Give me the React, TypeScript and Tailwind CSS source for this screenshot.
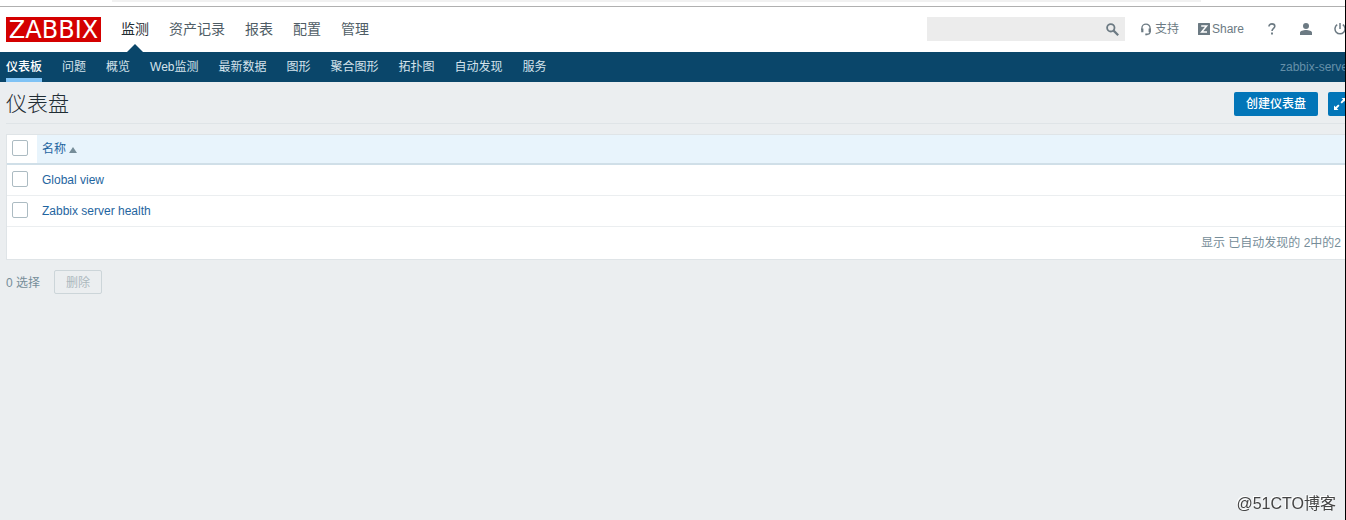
import { useState } from "react";

function App() {
  const [selected, setSelected] = useState<string[]>([]);

  const toggle = (name: string) =>
    setSelected((prev) =>
      prev.includes(name) ? prev.filter((n) => n !== name) : [...prev, name]
    );

  const allSelected = selected.length === dashboards.length;

  return (
    <div className="min-h-screen overflow-hidden border-r border-black bg-[#ebeef0] font-['Liberation_Sans','Noto_Sans_CJK_SC',sans-serif] text-xs leading-4 text-[#1f2c33]">
      <div className="h-[7px] border-b border-[#b0b0b0] bg-white px-28">
        <div className="mr-8 h-0.5 bg-[#f1f1f1]" />
      </div>
      <Header />
      <SubNav />

      <main className="pl-1.5">
        <div className="flex h-[42px] items-center justify-between border-b border-[#dfe4e7] pt-0.5">
          <h1 className="text-[21px] leading-6 font-light">仪表盘</h1>
          <div className="-mr-[7px] flex gap-2.5">
            <button className="h-6 rounded-xs bg-[#0275b8] px-3 font-medium text-white">
              创建仪表盘
            </button>
            <button
              aria-label="全屏"
              className="flex size-6 items-center justify-center rounded-xs bg-[#0275b8] text-white"
            >
              <FullscreenIcon />
            </button>
          </div>
        </div>

        <table className="mt-2.5 w-full border-separate border-spacing-0 border border-r-0 border-[#dfe4e7] bg-white text-left">
          <thead>
            <tr className="h-[30px]">
              <th className="w-[30px] border-b-2 border-[#d0dfe8] px-[5px] pb-0.5">
                <Checkbox
                  label="全选"
                  checked={allSelected}
                  onChange={() => setSelected(allSelected ? [] : dashboards)}
                />
              </th>
              <th className="border-b-2 border-[#d0dfe8] bg-[#e8f4fc] px-[5px] font-normal">
                <a href="#name" className="flex items-center gap-[3px] text-[#1f65a0]">
                  名称
                  <svg width="8" height="6" viewBox="0 0 8 6" className="mt-0.5">
                    <path d="M4 0l4 6H0z" fill="#768d99" />
                  </svg>
                </a>
              </th>
            </tr>
          </thead>
          <tbody>
            {dashboards.map((name) => (
              <tr key={name} className="h-[31px]">
                <td className="border-b border-[#ebeef0] px-[5px] pb-0.5">
                  <Checkbox
                    label={name}
                    checked={selected.includes(name)}
                    onChange={() => toggle(name)}
                  />
                </td>
                <td className="border-b border-[#ebeef0] px-[5px]">
                  <a href="#dashboard" className="text-[#1f65a0]">
                    {name}
                  </a>
                </td>
              </tr>
            ))}
            <tr className="h-8">
              <td colSpan={2} className="px-1 text-right text-[#768d99]">
                显示 已自动发现的 2中的2
              </td>
            </tr>
          </tbody>
        </table>

        <div className="mt-2.5 flex items-center gap-3.5 text-[#768d99]">
          <span className="pt-0.5">{selected.length} 选择</span>
          <button
            disabled={selected.length === 0}
            className="h-6 rounded-xs border border-[#ccd5d9] px-[11px] pt-0.5 text-[#acb8be]"
          >
            删除
          </button>
        </div>
      </main>

      <div className="fixed right-2.5 bottom-1.5 text-base leading-5 text-[#444] [text-shadow:-1px_-1px_0_#fff]">
        @51CTO博客
      </div>
    </div>
  );
}

function Header() {
  return (
    <header className="flex h-[45px] items-center bg-white pl-1.5 text-[#6c7a83]">
      <a
        href="#home"
        className="flex h-[25px] w-[95px] items-center justify-center bg-[#d40000] font-['DejaVu_Sans',sans-serif] text-2xl leading-6 text-white"
      >
        ZABBIX
      </a>
      <nav className="ml-5 flex h-full gap-5 text-sm leading-5">
        {menu.map((item, index) => (
          <a
            key={item}
            href="#menu"
            className={
              index === 0
                ? "relative flex items-center pb-0.5 text-[#1f2c33]"
                : "flex items-center pb-0.5 text-[#4f5d66]"
            }
          >
            {item}
            {index === 0 && (
              <svg
                width="16"
                height="8"
                viewBox="0 0 16 8"
                className="absolute bottom-0 left-1/2 -translate-x-1/2"
              >
                <path d="M8 0l8 8H0z" fill="#0a466a" />
              </svg>
            )}
          </a>
        ))}
      </nav>

      <div className="ml-auto flex h-full items-center pb-px">
        <form className="flex h-6 w-[198px] items-center bg-[#ececec]">
          <input
            type="text"
            aria-label="搜索"
            className="h-full min-w-0 flex-1 bg-transparent px-1 outline-none"
          />
          <button type="button" aria-label="搜索" className="pr-1.5">
            <svg width="13" height="13" viewBox="0 0 13 13" fill="none" stroke="currentColor">
              <circle cx="4.8" cy="4.8" r="3.7" strokeWidth="1.8" />
              <path d="M7.6 7.6l4.6 4.6" strokeWidth="2.2" />
            </svg>
          </button>
        </form>
        <a href="#support" className="ml-4 flex items-center gap-1">
          <svg width="10" height="13" viewBox="0 0 10 13" fill="none" stroke="currentColor">
            <path d="M.9 7V5.2a4.1 4.1 0 018.2 0v3.3c0 2-1.2 2.9-3.4 2.9" strokeWidth="1.3" />
            <path d="M1.3 5.4v3.8M8.7 5.4v3.8" strokeWidth="2.2" />
            <path d="M4.3 11.4h2" strokeWidth="1.8" />
          </svg>
          支持
        </a>
        <a href="#share" className="ml-[19px] flex items-center gap-0.5">
          <svg width="12" height="12" viewBox="0 0 12 12">
            <rect width="12" height="12" rx="0.5" fill="currentColor" />
            <path d="M3.2 2.9h5.4L3.6 9.1H9" fill="none" stroke="#fff" strokeWidth="1.5" />
          </svg>
          Share
        </a>
        <a href="#help" aria-label="帮助" className="ml-6">
          <svg width="8" height="12" viewBox="0 0 8 12" fill="none" stroke="currentColor">
            <path
              d="M1 3.4C1 1.8 2.2.9 3.9.9s2.9.9 2.9 2.4c0 2-2.8 2.2-2.8 4.8"
              strokeWidth="1.6"
            />
            <path d="M4 9.6v2" strokeWidth="1.9" />
          </svg>
        </a>
        <a href="#profile" aria-label="用户" className="ml-6">
          <svg width="12" height="12" viewBox="0 0 12 12" fill="currentColor">
            <circle cx="6" cy="3" r="3" />
            <path d="M0 12V9.6C0 8 3.4 7 6 7s6 1 6 2.6V12z" />
          </svg>
        </a>
        <a href="#logout" aria-label="退出" className="-mr-px ml-[22px]">
          <svg width="12" height="12" viewBox="0 0 12 12" fill="none" stroke="currentColor">
            <path d="M3.2 1.7a5 5 0 105.6 0M6 0v6" strokeWidth="1.5" />
          </svg>
        </a>
      </div>
    </header>
  );
}

function SubNav() {
  return (
    <nav className="flex h-[30px] justify-between bg-[#0a466a] pl-1.5 text-[#d5e3ec]">
      <div className="flex gap-5">
        {subMenu.map((item, index) => (
          <a
            key={item}
            href="#submenu"
            className={
              index === 0
                ? "flex items-center border-b-4 border-[#80c3f5] pt-1 font-medium text-white"
                : "flex items-center border-b-4 border-transparent pt-1"
            }
          >
            {item}
          </a>
        ))}
      </div>
      <span className="w-[65px] self-center overflow-hidden whitespace-nowrap text-[#6590a9]">
        zabbix-server
      </span>
    </nav>
  );
}

type CheckboxProps = {
  label: string;
  checked: boolean;
  onChange: () => void;
};

function Checkbox({ label, checked, onChange }: CheckboxProps) {
  return (
    <input
      type="checkbox"
      aria-label={label}
      checked={checked}
      onChange={onChange}
      className="block size-4 appearance-none rounded-xs border border-[#acbbc2] bg-white checked:bg-[#0275b8]"
    />
  );
}

function FullscreenIcon() {
  return (
    <svg width="14" height="14" viewBox="0 0 14 14" fill="currentColor">
      <path d="M8.5 1H13v4.5l-1.6-1.6-2.6 2.6-1.3-1.3 2.6-2.6zM1 8.5l1.6 1.6 2.6-2.6 1.3 1.3-2.6 2.6L5.5 13H1z" />
    </svg>
  );
}

const menu = ["监测", "资产记录", "报表", "配置", "管理"];

const subMenu = [
  "仪表板",
  "问题",
  "概览",
  "Web监测",
  "最新数据",
  "图形",
  "聚合图形",
  "拓扑图",
  "自动发现",
  "服务",
];

const dashboards = ["Global view", "Zabbix server health"];

export default App;
